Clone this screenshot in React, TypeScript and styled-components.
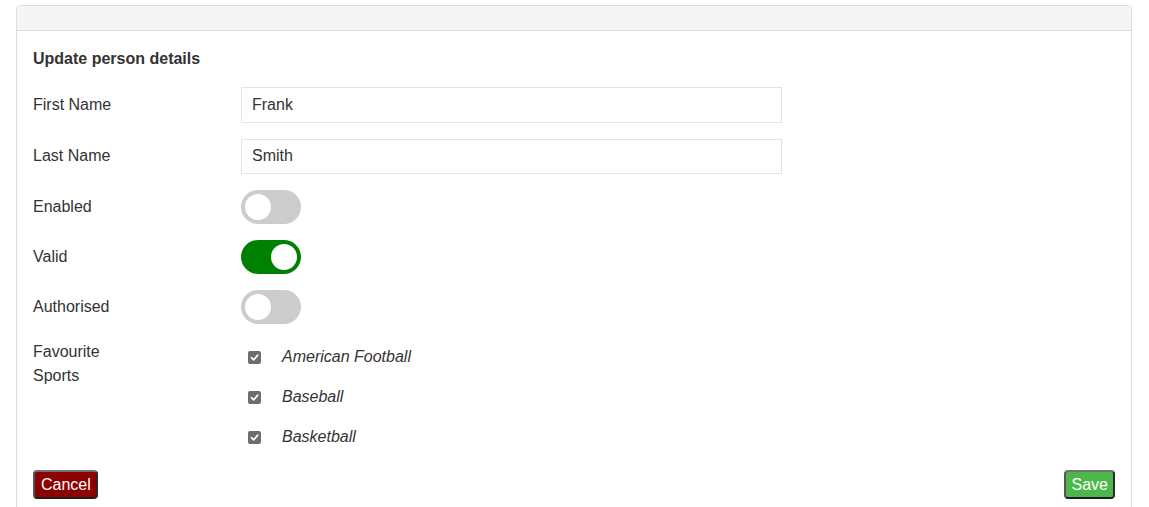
import styled, { createGlobalStyle } from 'styled-components';

const GlobalStyle = createGlobalStyle`
  html, body {
    margin: 0;
    padding: 0;
    background: #fff;
  }
  body {
    font-family: "Liberation Sans", Arial, Helvetica, sans-serif;
    font-size: 16px;
    color: #333;
  }
`;

const Page = styled.div`
  padding: 5px 17px 0 16px;
`;

const Panel = styled.div`
  border: 1px solid #ddd;
  border-radius: 4px;
  background: #fff;
  min-height: 520px;
`;

const PanelHeading = styled.div`
  height: 24px;
  background: #f5f5f5;
  border-bottom: 1px solid #ddd;
  border-radius: 3px 3px 0 0;
`;

const PanelBody = styled.div`
  padding: 17px 16px 16px 16px;
`;

const FormTitle = styled.h4`
  margin: 0 0 17px;
  font-size: 16px;
  line-height: 22px;
  font-weight: bold;
  color: #333;
`;

const FormRow = styled.div<{ $top?: boolean }>`
  display: grid;
  grid-template-columns: 208px 541px;
  align-items: ${(p) => (p.$top ? 'start' : 'center')};
  margin-bottom: 16px;
`;

const Label = styled.label`
  max-width: 100px;
  line-height: 24px;
  color: #333;
`;

const TextInput = styled.input`
  box-sizing: border-box;
  width: 541px;
  height: 35.5px;
  padding: 0 10px;
  border: 1px solid #e3e3e3;
  border-radius: 0;
  font-family: inherit;
  font-size: 16px;
  color: #333;
  outline: none;
`;

const Switch = styled.span<{ $on?: boolean }>`
  position: relative;
  display: inline-block;
  width: 60px;
  height: 34px;
  border-radius: 17px;
  background: ${(p) => (p.$on ? '#008000' : '#ccc')};

  &::before {
    content: '';
    position: absolute;
    top: 4px;
    left: ${(p) => (p.$on ? '30px' : '4px')};
    width: 26px;
    height: 26px;
    border-radius: 50%;
    background: #fff;
  }
`;

const SportList = styled.ul`
  list-style: none;
  margin: 0;
  padding: 5px 0 0 7px;
  display: flex;
  flex-direction: column;
  gap: 16px;
`;

const SportItem = styled.li`
  display: flex;
  align-items: center;
  line-height: 24px;
  font-style: italic;
  color: #333;
`;

const CheckBox = styled.span`
  display: inline-flex;
  align-items: center;
  justify-content: center;
  width: 13px;
  height: 13px;
  border-radius: 2px;
  background: #6e6e6e;
  margin-right: 21px;
  flex: none;
`;

const Actions = styled.div`
  display: flex;
  justify-content: space-between;
  margin-top: 21px;
`;

const Button = styled.button<{ $variant: 'cancel' | 'save' }>`
  font-family: "Liberation Sans", Arial, sans-serif;
  font-size: 16px;
  line-height: 17px;
  padding: 4px 5px 4px 6px;
  color: #fff;
  border: 2px solid;
  border-color: #707070 #2a2a2a #1e1e1e #555;
  border-radius: 4px;
  background: ${(p) => (p.$variant === 'cancel' ? '#8b0000' : '#4cb84c')};
  cursor: pointer;
`;

const Check = () => (
  <svg width="9" height="9" viewBox="0 0 10 10">
    <path d="M1.6 5.2 L4 7.6 L8.6 2.4" fill="none" stroke="#fff" strokeWidth="1.8" strokeLinecap="round" strokeLinejoin="round" />
  </svg>
);

const sports = ['American Football', 'Baseball', 'Basketball'];

export default function App() {
  return (
    <>
      <GlobalStyle />
      <Page>
        <Panel>
          <PanelHeading />
          <PanelBody>
            <FormTitle>Update person details</FormTitle>
            <FormRow>
              <Label>First Name</Label>
              <TextInput defaultValue="Frank" />
            </FormRow>
            <FormRow>
              <Label>Last Name</Label>
              <TextInput defaultValue="Smith" />
            </FormRow>
            <FormRow>
              <Label>Enabled</Label>
              <Switch />
            </FormRow>
            <FormRow>
              <Label>Valid</Label>
              <Switch $on />
            </FormRow>
            <FormRow>
              <Label>Authorised</Label>
              <Switch />
            </FormRow>
            <FormRow $top>
              <Label>Favourite Sports</Label>
              <SportList>
                {sports.map((s) => (
                  <SportItem key={s}>
                    <CheckBox>
                      <Check />
                    </CheckBox>
                    {s}
                  </SportItem>
                ))}
              </SportList>
            </FormRow>
            <Actions>
              <Button $variant="cancel">Cancel</Button>
              <Button $variant="save">Save</Button>
            </Actions>
          </PanelBody>
        </Panel>
      </Page>
    </>
  );
}
